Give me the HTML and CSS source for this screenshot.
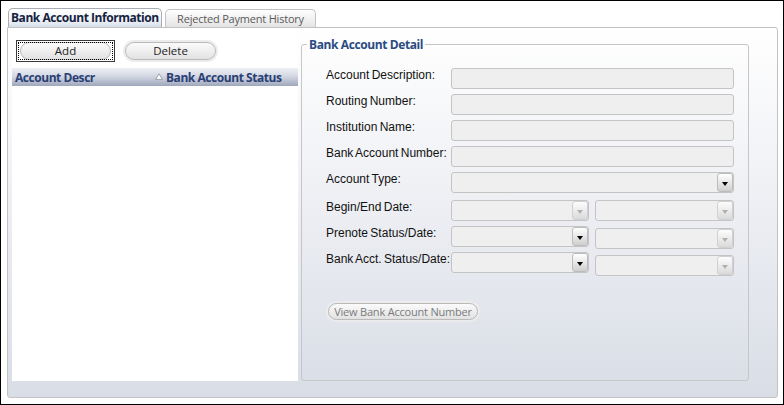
FILE: index.html
```html
<!DOCTYPE html>
<html>
<head>
<meta charset="utf-8">
<link rel="stylesheet" href="styles.css">
</head>
<body>
<div class="window">
  <div class="tabs">
    <div class="tab active">Bank Account Information</div>
    <div class="tab">Rejected Payment History</div>
  </div>
  <div class="panel">
    <div class="list-col">
      <div class="btn-row">
        <div class="btn-focus"><span class="pill">Add</span></div>
        <span class="pill halo delete">Delete</span>
      </div>
      <div class="grid-head">
        <span class="col-a">Account Descr</span>
        <span class="col-b"><svg class="sort" width="8" height="7" viewBox="0 0 8 7"><path d="M4 0.8 L7.4 6.4 L0.6 6.4 Z" fill="#ffffff" stroke="#8a90a0" stroke-width="0.8"/></svg>Bank Account Status</span>
      </div>
    </div>
    <fieldset class="detail">
      <legend>Bank Account Detail</legend>
      <div class="row"><label>Account Description:</label><div class="field wide"></div></div>
      <div class="row"><label>Routing Number:</label><div class="field wide"></div></div>
      <div class="row"><label>Institution Name:</label><div class="field wide"></div></div>
      <div class="row"><label>Bank Account Number:</label><div class="field wide"></div></div>
      <div class="row"><label>Account Type:</label><div class="field wide select"><span class="dd on"></span></div></div>
      <div class="row gap-top"><label>Begin/End Date:</label><div class="field half select"><span class="dd"></span></div><div class="field half2 select"><span class="dd"></span></div></div>
      <div class="row"><label>Prenote Status/Date:</label><div class="field half select"><span class="dd on"></span></div><div class="field half2 select shift2"><span class="dd"></span></div></div>
      <div class="row"><label>Bank Acct. Status/Date:</label><div class="field half select"><span class="dd on"></span></div><div class="field half2 select shift3"><span class="dd"></span></div></div>
      <div class="view-row"><span class="pill halo view">View Bank Account Number</span></div>
    </fieldset>
  </div>
</div>
</body>
</html>
```
FILE: styles.css
```css
html, body { margin: 0; padding: 0; background: #fff; }
.window {
  width: 784px; height: 405px; box-sizing: border-box;
  border: 1px solid #000; background: #fff;
  padding: 7px 0 0 6px;
  font-family: "Open Sans", "Noto Sans", sans-serif;
}
.tabs { display: flex; align-items: flex-end; height: 19px; margin-left: 1px; gap: 3px; }
.tab {
  box-sizing: border-box; height: 18px; width: 151px;
  border: 1px solid #c2c2c2; border-bottom: none;
  border-radius: 5px 5px 0 0;
  background: linear-gradient(#ffffff, #e4e4e4);
  font-size: 11px; line-height: 17px; color: #5a5a5a;
  text-align: center; letter-spacing: -0.2px;
}
.tab.active {
  width: 154px; height: 19px;
  background: linear-gradient(#ffffff 0%, #f2f4f8 60%, #d6deea 100%);
  border-color: #a9adb5;
  color: #15233f; font-weight: 700; text-align: left; padding-left: 2px;
  font-size: 12px; letter-spacing: -0.45px; line-height: 18px;
}
.panel {
  box-sizing: border-box; width: 771px; height: 371px;
  border: 1px solid #c2c2c2; border-radius: 0 3px 3px 3px;
  background: linear-gradient(#ffffff 0%, #f4f5f8 30%, #d9dde6 100%);
  display: flex; gap: 3px; padding: 7px 0 0 4px;
}
.list-col { width: 286px; height: 346px; background: #fff; flex: none; }
.btn-row { display: flex; align-items: center; gap: 9px; padding: 5px 0 0 4px; height: 22px; }
.pill {
  display: inline-block; box-sizing: border-box; height: 18px;
  border: 1px solid #b9b9b9; border-radius: 9px;
  background: linear-gradient(#fbfbfb, #e2e2e2);
  font-size: 11.5px; line-height: 16px; color: #222; text-align: center;
}
.halo { box-shadow: 0 0 0 2px #ececec; }
.btn-focus {
  position: relative; box-sizing: border-box; width: 99px; height: 22px;
  border: 1px solid #3a3a3a; padding: 0 3px;
  display: flex; align-items: center;
}
.btn-focus::after {
  content: ""; position: absolute; left: 1px; top: 1px; right: 1px; bottom: 1px;
  border: 1px dotted #000;
}
.btn-focus .pill { width: 91px; }
.delete { width: 91px; margin-left: 1px; }
.grid-head {
  margin-top: 6px; height: 18px; display: flex; align-items: center;
  background: linear-gradient(#eef0f5 0%, #d3d8e3 45%, #9ea7bb 100%);
  font-size: 12px; font-weight: 700; color: #2a4075; letter-spacing: -0.45px;
}
.col-a { width: 140px; padding-left: 3px; }
.col-b { display: flex; align-items: center; }
.sort { margin-right: 3px; margin-top: -1px; }
.detail {
  margin: 2px 0 0 0; padding: 16px 0 0 24px; width: 448px; height: 344px;
  box-sizing: border-box; border: 1px solid #c6c6c6; border-radius: 3px;
  min-width: 0;
}
.detail legend {
  margin-left: -19px; padding: 0 2px;
  font-size: 12px; line-height: 15px; font-weight: 700; color: #2a4a82;
  letter-spacing: -0.4px;
}
.row { display: flex; height: 21px; margin-bottom: 5px; }
.row.gap-top { margin-top: 7px; }
.row label {
  width: 125px; flex: none;
  font-family: "Liberation Sans", Arial, sans-serif; font-size: 12px;
  line-height: 14px; color: #111; word-spacing: -1px;
}
.field {
  position: relative; box-sizing: border-box; height: 21px;
  border: 1px solid #c4c4c4; border-radius: 3px; background: #efefef;
}
.wide { width: 283px; }
.half { width: 138px; }
.half2 { width: 139px; margin-left: 6px; }
.shift2 { margin-top: 2px; }
.shift3 { margin-top: 3px; }
.dd {
  position: absolute; right: 0; top: 0; width: 16px; height: 19px; box-sizing: border-box;
  border: 1px solid #d0d0d0; border-radius: 3px;
  background: linear-gradient(#fdfdfd, #dadada);
}
.dd::after {
  content: ""; position: absolute; left: 4px; top: 8px;
  border-left: 3px solid transparent; border-right: 3px solid transparent;
  border-top: 4px solid #b0b0b0;
}
.dd.on { border-color: #bcbcbc; background: linear-gradient(#ffffff, #cfcfcf); }
.dd.on::after { border-top-color: #000; }
.view-row { padding: 21px 0 0 2px; }
.view { width: 150px; height: 17px; line-height: 15px; color: #7a7a7a; font-size: 11px; letter-spacing: -0.2px; }
```
